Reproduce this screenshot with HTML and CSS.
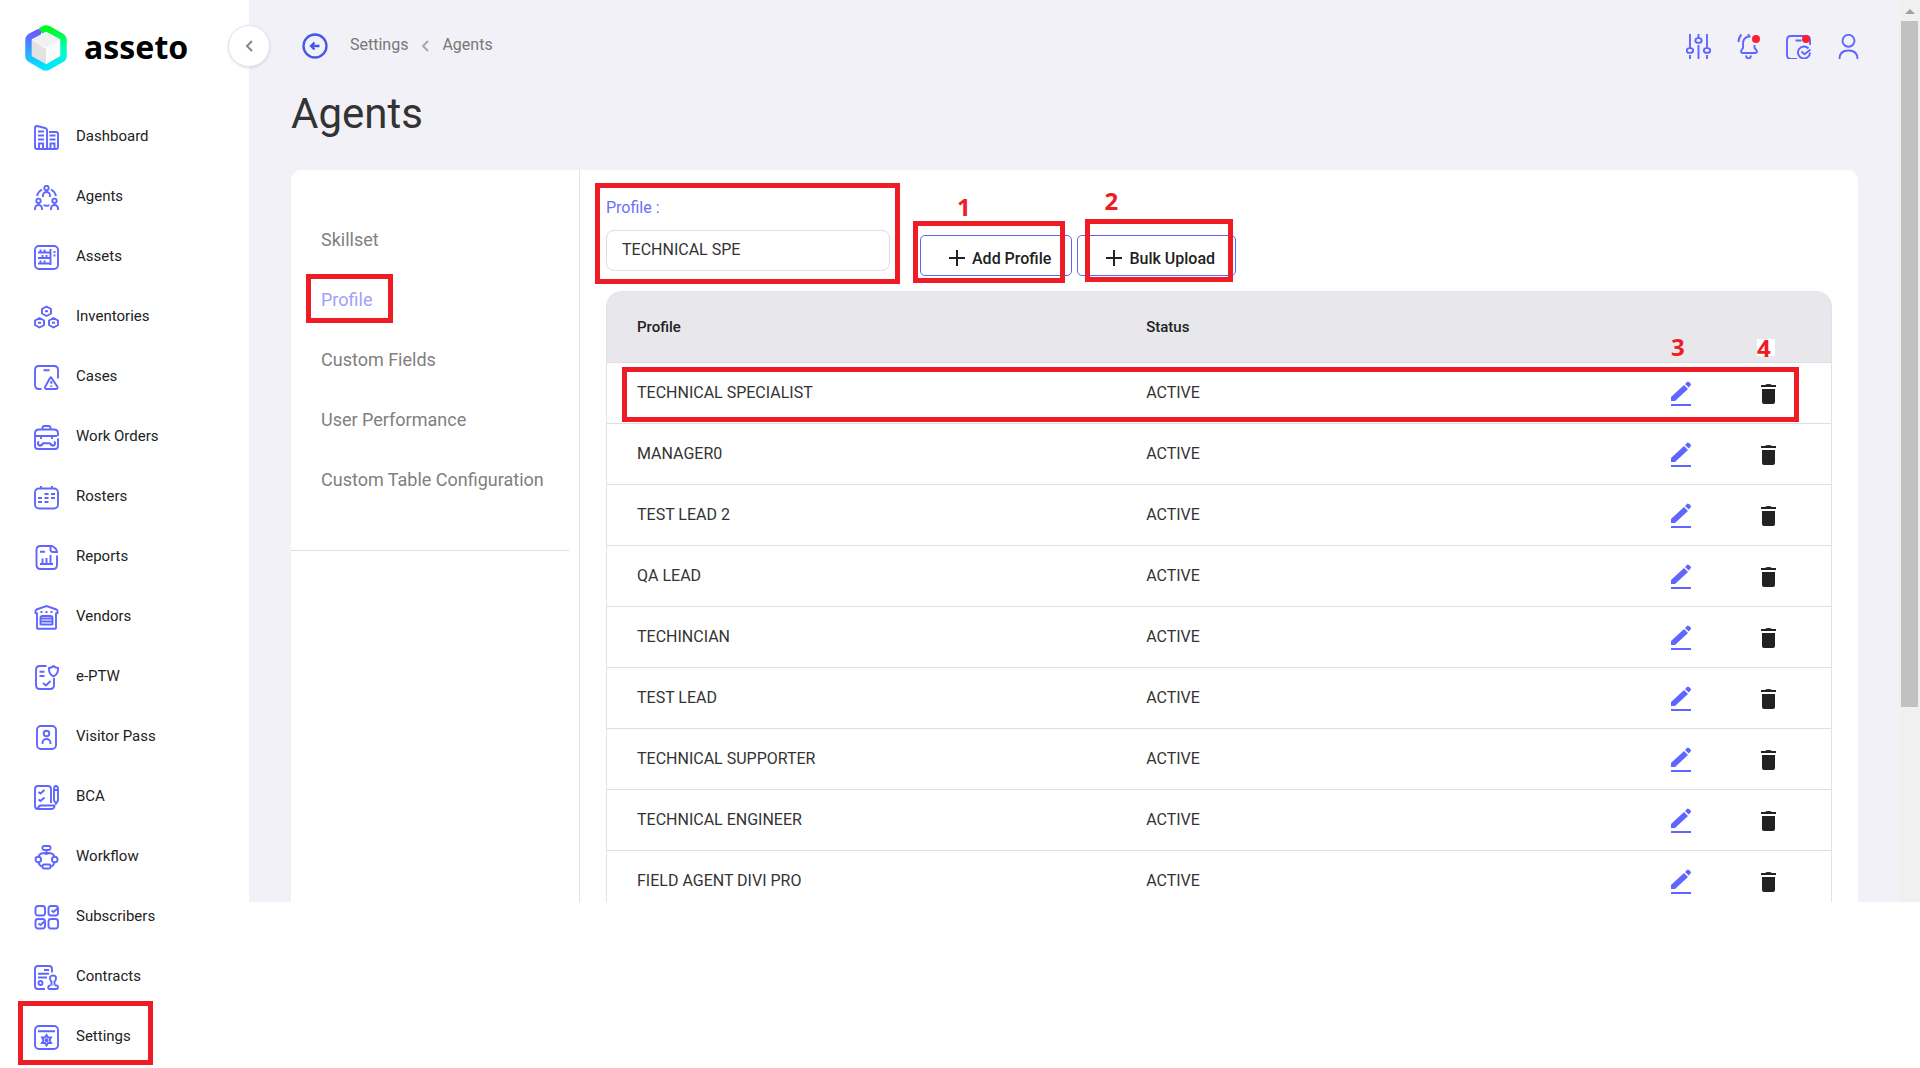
FILE: index.html
```html
<!DOCTYPE html>
<html lang="en">
<head>
    <meta charset="UTF-8">
    <meta name="viewport" content="width=device-width, initial-scale=1.0">
    <title>Agents - Asseto</title>
    <link rel="stylesheet" href="styles.css">
</head>
<body>
    <!-- Icon set -->
    <svg class="icon-set" aria-hidden="true">
        <symbol id="i-dashboard" viewBox="0 0 25 25"><path d="M1 3q0-2 2-2l8 2q2 .5 2 2.500V24H3q-2 0-2-2zM15 7h7q2 0 2 2v13q0 2-2 2h-7q-1.500 0-1.500-1.500M4 6.500h6M4 10.500h6M4 14.500h6M15.500 10.500h6M15.500 14.500h6M5 24v-5.500h4V24M16.500 24v-5.500h4V24"/></symbol>
        <symbol id="i-agents" viewBox="0 0 25 25"><circle cx="12.500" cy="3" r="2.200"/><circle cx="4.500" cy="15.800" r="2.200"/><circle cx="20.500" cy="15.800" r="2.200"/><path d="M9 12v-1.500a3.500 3.500 0 0 1 7 0V12M1 25v-1.500a3.500 3.500 0 0 1 7 0V25M17 25v-1.500a3.500 3.500 0 0 1 7 0V25M3 11q1.200-4.500 5-6.500M22 11q-1.200-4.500-5-6.500M9.500 20q3 1.500 6 0"/></symbol>
        <symbol id="i-assets" viewBox="0 0 25 25"><rect x="1" y="1" width="23" height="23" rx="4"/><path d="M4 7.500h13M4 13h13M4 18.500h13M16.500 4v16M6.500 7V4.500M10.500 7V4.500M8.500 12.500V10M12.500 12.500V10M6.500 18v-2.500M10.500 18v-2.500M20.500 6v2M20.500 9.500v2"/></symbol>
        <symbol id="i-inventories" viewBox="0 0 25 25"><path d="M12.500 1.500l4.500 2.500v4.500l-4.500 2.500-4.500-2.500V4zM5.500 13l4.500 2.500V20l-4.500 2.500L1 20v-4.500zM19.500 13l4.500 2.500V20l-4.500 2.500L15 20v-4.500zM11 6.300h3M4 17.800h3M18 17.800h3"/></symbol>
        <symbol id="i-cases" viewBox="0 0 25 25"><path d="M7.500 24H5q-4 0-4-4V5q0-4 4-4h15q4 0 4 4v8.500M9.500 5.200h6M17.200 12.500l6.300 9.500q.5 2-1.500 2h-9.500q-2 0-1.500-2l4.500-8q1-2.500 1.700-1.500zM17.300 16v2.800M17.300 20.500v1.400"/></symbol>
        <symbol id="i-workorders" viewBox="0 0 25 25"><path d="M8.500 4.500V3q0-2 2-2h4q2 0 2 2v1.500M1 11V8.500q0-4 4-4h15q4 0 4 4v2.500M1 9v12q0 3 3 3h17q3 0 3-3v-7.500M1 11h22M7 11v3M18 11v3M8.500 18.200h8M8.500 18.200a2.300 2.300 0 1 1-3.500-1.700M8.500 18.200a2.300 2.300 0 0 1-3.500 1.700M16.500 18.200a2.300 2.300 0 1 0 3.500-1.700M16.500 18.200a2.300 2.300 0 0 0 3.500 1.700"/></symbol>
        <symbol id="i-rosters" viewBox="0 0 25 25"><rect x="1" y="3.500" width="23" height="20" rx="4"/><path d="M7 3V1M18 3V1M10.500 9h4M17 9h4M4 13h4M10.500 13h4M17 13h4M4 17h4M10.500 17h4"/></symbol>
        <symbol id="i-reports" viewBox="0 0 25 25"><path d="M17 1H6.500q-4 0-4 4v15q0 4 4 4H19q4 0 4-4v-9.500M16.500 1.500v3q0 2.500 2.500 2.500h4q0-2-1.500-3.500L19 1.500q-1-.8-2.500-.5M6 6.800h5M6 19h13M8.500 18.500v-5M12.500 18.500V13M16.500 18.500V10"/></symbol>
        <symbol id="i-vendors" viewBox="0 0 25 25"><path d="M3 8.500L1.500 8V6q0-1 1-1.500l10-3.500 10 3.500q1 .5 1 1.500v2l-1.500.5V23q0 .8-1 .8H4q-1 0-1-.8zM6.500 20v-7q0-2 2-2h8q2 0 2 2v7M7 13.500h11M7 16.500h11M6.500 19.500h12M6.500 7h2M11.500 7h2M16.500 7h2"/></symbol>
        <symbol id="i-eptw" viewBox="0 0 25 25"><path d="M12.500 1H6Q2 1 2 5v15q0 4 4 4h10q4 0 4-4v-7M15 3q2.500 0 4.500-2 2 2 4.500 2 .5 6-4.500 8.500Q14.500 9 15 3zM5.500 6.800h5M5.500 11h5M9 18l3 2.500 4.500-4.500"/></symbol>
        <symbol id="i-visitor" viewBox="0 0 25 25"><rect x="3" y="1" width="19" height="23" rx="4"/><circle cx="12.500" cy="8.500" r="2.800"/><path d="M8.500 19v-1a4 4 0 0 1 8 0v1"/></symbol>
        <symbol id="i-bca" viewBox="0 0 25 25"><path d="M17 18V4q0-3-3-3H4Q1 1 1 4v17q0 3 3 3h13q3.500 0 3.500-3.500H7Q4 20.500 4 24M4.500 7l2 1.500 4-3.500M4.500 14.500l2 1.500 4-3.500M20 4q0-3 2-3t2 3v11.500l-2 3-2-3zM20 5h4"/></symbol>
        <symbol id="i-workflow" viewBox="0 0 25 25"><rect x="8.500" y="1" width="8" height="4" rx="1.500"/><circle cx="4.300" cy="14.500" r="2.800"/><circle cx="20.700" cy="14.500" r="2.800"/><rect x="8.500" y="19.500" width="8" height="4" rx="1.500"/><path d="M12.500 5v3M9.500 8h6l-3 1zM4.500 11.500Q6 8 10 8M20.500 11.500Q19 8 15 8M4.500 17.500q1 3.500 4 4M20.500 17.500q-1 3.500-4 4"/></symbol>
        <symbol id="i-subscribers" viewBox="0 0 25 25"><rect x="1.500" y="1" width="9.500" height="9.500" rx="2.500"/><rect x="14.500" y="1" width="9.500" height="9.500" rx="2.500"/><rect x="1.500" y="14" width="9.500" height="9.500" rx="2.500"/><rect x="14.500" y="14" width="9.500" height="9.500" rx="2.500"/><path d="M17.500 5.500l2 1.500 4-3.500M4.500 18.500l2 1.500 4-3.500"/></symbol>
        <symbol id="i-contracts" viewBox="0 0 25 25"><path d="M11 24H4q-3 0-3-3V4q0-3 3-3h11q3 0 3 3v3.500M10 5h5M4 8.800h11M4 12.500h9"/><circle cx="6.500" cy="18" r="2"/><path d="M17.500 20.500v-4q-2-1.500-1.500-4 .5-2 3-2t3 2q.5 2.500-1.500 4v4M16.500 20.500q-2 0-2.300 1.500-.2 2 1.500 2H22q2 0 2-2t-3-1.500"/></symbol>
        <symbol id="i-settings" viewBox="0 0 25 25"><rect x="1" y="1" width="23" height="23" rx="4"/><path d="M4 6.200h17M12.500 10l1.500 2.500h3l-1.500 2.800 1.500 2.700h-3l-1.500 2.500-1.500-2.500H8l1.500-2.700L8 12.500h3z"/><circle cx="12.500" cy="15.200" r="1"/></symbol>

        <symbol id="i-sliders" viewBox="0 0 25 25"><ellipse cx="4" cy="16.500" rx="3.200" ry="2.400"/><ellipse cx="12.500" cy="6.500" rx="3.200" ry="2.400"/><ellipse cx="21" cy="16.500" rx="3.200" ry="2.400"/><path d="M4 0v14M4 21v4M12.500 0v4M12.500 11v14M21 0v14M21 21v4"/></symbol>
        <symbol id="i-bell" viewBox="0 0 25 25"><path d="M14.500 2.500h-2q-5.500 1-5.500 7.500v4l-1.700 2.500q-.8 2.500 1.700 2.500h12q2.500 0 1.700-2.500L18.500 14v-3M12.500 0v2.500M10 21.500q.5 3 2.500 3t2.500-3M2.500 8q0-4.500 3-7.500"/></symbol>
        <symbol id="i-doccheck" viewBox="0 0 25 25"><path d="M11 25H5q-4 0-4-4V6q0-4 4-4h15q4 0 4 4v5M9.500 6.500h6M22.500 14.500a6 6 0 1 0 1.500 4M15.500 17.500l3 2.800 6-4.800"/></symbol>
        <symbol id="i-user" viewBox="0 0 25 25"><circle cx="12.500" cy="6.800" r="6"/><path d="M3.500 25q0-8.500 9-8.500t9 8.500"/></symbol>
        <symbol id="i-back" viewBox="0 0 26 26"><circle cx="13" cy="13" r="11.500"/><path d="M17.500 13H9.500M12.500 9.500L9 13l3.500 3.500"/></symbol>
        <symbol id="i-chevron" viewBox="0 0 8 12"><path d="M7 1L2 6l5 5"/></symbol>
        <symbol id="i-plus" viewBox="0 0 16 16"><path d="M8 0v16M0 8h16"/></symbol>
        <symbol id="i-edit" viewBox="0 0 20 26"><path d="M0 20v-4L13 4l4 4L4 20zM14 3l2.500-2.500Q20 1.500 20 4l-2.300 2.500z"/><rect y="23" width="20" height="2"/></symbol>
        <symbol id="i-trash" viewBox="0 0 15 20"><path d="M0 1h4q1-1 3.500-1T11 1h4v2H0zM1 5h13v13q0 2-2 2H3q-2 0-2-2z"/></symbol>
    </svg>

    <div class="app">
        <!-- Sidebar -->
        <aside class="sidebar">
            <a href="#" class="logo">
                <svg class="logo-mark" viewBox="0 0 42 46" aria-hidden="true">
                    <defs>
                        <linearGradient id="gLeft" x1="0" y1="0" x2="0" y2="1"><stop offset="0" stop-color="#6b5cff"/><stop offset=".5" stop-color="#389cff"/><stop offset="1" stop-color="#00e4ff"/></linearGradient>
                        <linearGradient id="gRight" x1="0" y1="0" x2="0" y2="1"><stop offset="0" stop-color="#00f91c"/><stop offset=".5" stop-color="#00ffb8"/><stop offset="1" stop-color="#00e8ff"/></linearGradient>
                    </defs>
                    <path d="M21 6l15 8v17l-15 9-15-9V14z" fill="#fff"/>
                    <path d="M21 7l14 8-14 8-14-8z" fill="#f1f1f1"/>
                    <path d="M7 15l14 9v16L7 31z" fill="#e2e2e2"/>
                    <path d="M35 15l-14 9v16l14-9z" fill="#fbfbfb"/>
                    <path d="M15.500 6l3.500-2q2-1 4 0l13.500 7.500q2 1.200 2 3.500v16q0 2-2 3.200L23 41.800q-2 1-4 0" fill="none" stroke="url(#gRight)" stroke-width="6.500"/>
                    <path d="M13 7.500L5.500 11.500Q3.500 13 3.500 15v16q0 2 2 3.200L19 41.800" fill="none" stroke="url(#gLeft)" stroke-width="6.500" stroke-linecap="round"/>
                </svg>
                <span class="logo-text">asseto</span>
            </a>
            <button class="collapse-button" aria-label="Collapse menu"><svg class="chevron"><use href="#i-chevron"/></svg></button>

            <nav class="main-menu">
                <a href="#"><svg><use href="#i-dashboard"/></svg>Dashboard</a>
                <a href="#"><svg><use href="#i-agents"/></svg>Agents</a>
                <a href="#"><svg><use href="#i-assets"/></svg>Assets</a>
                <a href="#"><svg><use href="#i-inventories"/></svg>Inventories</a>
                <a href="#"><svg><use href="#i-cases"/></svg>Cases</a>
                <a href="#"><svg><use href="#i-workorders"/></svg>Work Orders</a>
                <a href="#"><svg><use href="#i-rosters"/></svg>Rosters</a>
                <a href="#"><svg><use href="#i-reports"/></svg>Reports</a>
                <a href="#"><svg><use href="#i-vendors"/></svg>Vendors</a>
                <a href="#"><svg><use href="#i-eptw"/></svg>e-PTW</a>
                <a href="#"><svg><use href="#i-visitor"/></svg>Visitor Pass</a>
                <a href="#"><svg><use href="#i-bca"/></svg>BCA</a>
                <a href="#"><svg><use href="#i-workflow"/></svg>Workflow</a>
                <a href="#"><svg><use href="#i-subscribers"/></svg>Subscribers</a>
                <a href="#"><svg><use href="#i-contracts"/></svg>Contracts</a>
                <a href="#"><svg><use href="#i-settings"/></svg>Settings<span class="mark mark-settings"></span></a>
            </nav>
        </aside>

        <!-- Page -->
        <div class="page">
            <main class="main">
                <header class="topbar">
                    <button class="icon-button" aria-label="Back"><svg class="back-icon"><use href="#i-back"/></svg></button>
                    <nav class="breadcrumb">
                        <a href="#">Settings</a>
                        <svg class="chevron"><use href="#i-chevron"/></svg>
                        <a href="#">Agents</a>
                    </nav>
                    <div class="topbar-actions">
                        <button class="icon-button" aria-label="Filters"><svg><use href="#i-sliders"/></svg></button>
                        <button class="icon-button" aria-label="Notifications"><svg><use href="#i-bell"/></svg><span class="dot"></span></button>
                        <button class="icon-button" aria-label="Tasks"><svg><use href="#i-doccheck"/></svg><span class="dot"></span></button>
                        <button class="icon-button" aria-label="Account"><svg><use href="#i-user"/></svg></button>
                    </div>
                </header>

                <h1>Agents</h1>

                <div class="card">
                    <div class="sub-menu">
                        <nav>
                            <a href="#">Skillset</a>
                            <a href="#" class="active">Profile<span class="mark mark-tab"></span></a>
                            <a href="#">Custom Fields</a>
                            <a href="#">User Performance</a>
                            <a href="#">Custom Table Configuration</a>
                        </nav>
                    </div>

                    <section class="content">
                        <div class="toolbar">
                            <div class="field">
                                <label for="profile">Profile :</label>
                                <input type="text" id="profile" value="TECHNICAL SPE">
                                <span class="mark mark-field"></span>
                            </div>
                            <div class="toolbar-buttons">
                                <button class="outline-button"><svg><use href="#i-plus"/></svg>Add Profile<span class="mark mark-add"></span><span class="step step-add">1</span></button>
                                <button class="outline-button"><svg><use href="#i-plus"/></svg>Bulk Upload<span class="mark mark-bulk"></span><span class="step step-bulk">2</span></button>
                            </div>
                        </div>

                        <div class="table-box">
                            <table>
                                <thead>
                                    <tr>
                                        <th class="col-profile">Profile</th>
                                        <th>Status</th>
                                        <th class="col-edit"><span class="step step-edit">3</span></th>
                                        <th class="col-delete"><span class="step step-delete">4</span></th>
                                    </tr>
                                </thead>
                                <tbody>
                                    <tr>
                                        <td>TECHNICAL SPECIALIST</td>
                                        <td>ACTIVE</td>
                                        <td class="col-edit"><button class="row-button" aria-label="Edit"><svg class="edit"><use href="#i-edit"/></svg></button></td>
                                        <td class="col-delete"><button class="row-button" aria-label="Delete"><svg class="trash"><use href="#i-trash"/></svg></button></td>
                                    </tr>
                                    <tr>
                                        <td>MANAGER0</td>
                                        <td>ACTIVE</td>
                                        <td class="col-edit"><button class="row-button" aria-label="Edit"><svg class="edit"><use href="#i-edit"/></svg></button></td>
                                        <td class="col-delete"><button class="row-button" aria-label="Delete"><svg class="trash"><use href="#i-trash"/></svg></button></td>
                                    </tr>
                                    <tr>
                                        <td>TEST LEAD 2</td>
                                        <td>ACTIVE</td>
                                        <td class="col-edit"><button class="row-button" aria-label="Edit"><svg class="edit"><use href="#i-edit"/></svg></button></td>
                                        <td class="col-delete"><button class="row-button" aria-label="Delete"><svg class="trash"><use href="#i-trash"/></svg></button></td>
                                    </tr>
                                    <tr>
                                        <td>QA LEAD</td>
                                        <td>ACTIVE</td>
                                        <td class="col-edit"><button class="row-button" aria-label="Edit"><svg class="edit"><use href="#i-edit"/></svg></button></td>
                                        <td class="col-delete"><button class="row-button" aria-label="Delete"><svg class="trash"><use href="#i-trash"/></svg></button></td>
                                    </tr>
                                    <tr>
                                        <td>TECHINCIAN</td>
                                        <td>ACTIVE</td>
                                        <td class="col-edit"><button class="row-button" aria-label="Edit"><svg class="edit"><use href="#i-edit"/></svg></button></td>
                                        <td class="col-delete"><button class="row-button" aria-label="Delete"><svg class="trash"><use href="#i-trash"/></svg></button></td>
                                    </tr>
                                    <tr>
                                        <td>TEST LEAD</td>
                                        <td>ACTIVE</td>
                                        <td class="col-edit"><button class="row-button" aria-label="Edit"><svg class="edit"><use href="#i-edit"/></svg></button></td>
                                        <td class="col-delete"><button class="row-button" aria-label="Delete"><svg class="trash"><use href="#i-trash"/></svg></button></td>
                                    </tr>
                                    <tr>
                                        <td>TECHNICAL SUPPORTER</td>
                                        <td>ACTIVE</td>
                                        <td class="col-edit"><button class="row-button" aria-label="Edit"><svg class="edit"><use href="#i-edit"/></svg></button></td>
                                        <td class="col-delete"><button class="row-button" aria-label="Delete"><svg class="trash"><use href="#i-trash"/></svg></button></td>
                                    </tr>
                                    <tr>
                                        <td>TECHNICAL ENGINEER</td>
                                        <td>ACTIVE</td>
                                        <td class="col-edit"><button class="row-button" aria-label="Edit"><svg class="edit"><use href="#i-edit"/></svg></button></td>
                                        <td class="col-delete"><button class="row-button" aria-label="Delete"><svg class="trash"><use href="#i-trash"/></svg></button></td>
                                    </tr>
                                    <tr>
                                        <td>FIELD AGENT DIVI PRO</td>
                                        <td>ACTIVE</td>
                                        <td class="col-edit"><button class="row-button" aria-label="Edit"><svg class="edit"><use href="#i-edit"/></svg></button></td>
                                        <td class="col-delete"><button class="row-button" aria-label="Delete"><svg class="trash"><use href="#i-trash"/></svg></button></td>
                                    </tr>
                                </tbody>
                            </table>
                            <span class="mark mark-row"></span>
                        </div>
                    </section>
                </div>
            </main>

            <div class="scrollbar" aria-hidden="true">
                <span class="scroll-arrow"></span>
                <span class="scroll-thumb"></span>
            </div>
        </div>
    </div>
</body>
</html>
```

FILE: styles.css
```css
* {
    box-sizing: border-box;
}

body {
    margin: 0;
    font-family: Roboto, "Liberation Sans", sans-serif;
    font-size: 16px;
    color: #222;
    background: #fff;
}

a {
    color: inherit;
    text-decoration: none;
}

button {
    font: inherit;
    color: inherit;
    cursor: pointer;
}

svg {
    display: block;
    fill: none;
    stroke: #5f66ff;
    stroke-width: 2;
    flex-shrink: 0;
}

.icon-set {
    position: absolute;
    width: 0;
    height: 0;
}

.app {
    display: flex;
    align-items: flex-start;
}

/* Sidebar */
.sidebar {
    position: relative;
    width: 249px;
    flex-shrink: 0;
}

.logo {
    display: flex;
    align-items: center;
    gap: 17px;
    height: 106px;
    padding: 0 0 10px 25px;
}

.logo-mark {
    width: 42px;
    height: 46px;
    stroke: none;
}

.logo-text {
    padding-bottom: 4px;
    font-family: "Noto Sans", "Open Sans", sans-serif;
    font-size: 32px;
    font-weight: 700;
    color: #000;
}

.collapse-button {
    position: absolute;
    top: 25px;
    right: -21px;
    z-index: 2;
    display: flex;
    align-items: center;
    justify-content: center;
    width: 42px;
    height: 42px;
    padding: 0;
    border: 1px solid #e4e3ea;
    border-radius: 50%;
    background: #fff;
    box-shadow: 0 1px 3px rgba(0, 0, 0, 0.12);
}

.chevron {
    width: 8px;
    height: 12px;
    stroke: #888;
}

.main-menu a {
    position: relative;
    display: flex;
    align-items: center;
    gap: 17px;
    height: 60px;
    padding-left: 34px;
    font-size: 15px;
}

.main-menu svg {
    width: 25px;
    height: 25px;
    margin-top: 3px;
    stroke-width: 1.9;
}

/* Page */
.page {
    display: flex;
    flex: 1;
    min-width: 0;
    height: calc(100vh - 166px);
    overflow: hidden;
    background: #f2f1f7;
}

.main {
    flex: 1;
    min-width: 0;
    padding: 0 41px 0 42px;
}

.topbar {
    display: flex;
    align-items: center;
    height: 91px;
    padding-left: 11px;
}

.icon-button {
    position: relative;
    padding: 0;
    border: none;
    background: none;
}

.icon-button svg {
    width: 25px;
    height: 25px;
    stroke-width: 1.9;
}

.icon-button .back-icon {
    width: 26px;
    height: 26px;
    stroke: #4458e8;
    stroke-width: 2.3;
}

.breadcrumb {
    display: flex;
    align-items: center;
    gap: 13px;
    padding: 0 0 2px 22px;
    color: #777;
}

.breadcrumb .chevron {
    margin-top: 2px;
    stroke: #aaa;
}

.topbar-actions {
    display: flex;
    gap: 25px;
    margin-left: auto;
    margin-right: -3px;
    padding-top: 2px;
}

.dot {
    position: absolute;
    top: 1px;
    right: 1px;
    width: 8px;
    height: 8px;
    border-radius: 50%;
    background: #ff1f2d;
}

h1 {
    margin: 0;
    height: 79px;
    font-size: 42px;
    font-weight: 400;
    line-height: 46px;
    color: #333;
}

.card {
    display: flex;
    min-height: 900px;
    border-radius: 10px;
    background: #fff;
}

.sub-menu {
    width: 289px;
    flex-shrink: 0;
    padding-right: 10px;
    border-right: 1px solid #e2e2e6;
}

.sub-menu nav {
    padding: 39px 0 41px 30px;
    border-bottom: 1px solid #dedede;
}

.sub-menu a {
    position: relative;
    display: flex;
    align-items: center;
    height: 60px;
    font-size: 18px;
    color: #808080;
}

.sub-menu .active {
    color: #a09ffa;
}

.content {
    flex: 1;
    min-width: 0;
    padding: 25px 26px 0;
}

.toolbar {
    display: flex;
    gap: 30px;
    align-items: flex-start;
}

.field {
    position: relative;
    width: 284px;
}

.field label {
    display: block;
    margin-bottom: 9px;
    line-height: 26px;
    color: #6b6ef9;
}

.field input {
    display: block;
    width: 100%;
    height: 41px;
    padding: 0 15px 3px;
    border: 1px solid #dcdce4;
    border-radius: 8px;
    font: inherit;
    color: #333;
    background: #fff;
}

.toolbar-buttons {
    display: flex;
    gap: 5px;
    padding-top: 40px;
}

.outline-button {
    position: relative;
    display: flex;
    align-items: center;
    gap: 7px;
    height: 41px;
    padding: 5px 20px 0 28px;
    border: 1px solid #6064f5;
    border-radius: 5px;
    background: #fff;
    font-weight: 500;
    white-space: nowrap;
}

.outline-button svg {
    width: 16px;
    height: 16px;
    stroke: #222;
}

/* Table */
.table-box {
    position: relative;
    margin-top: 15px;
    border: 1px solid #e2e2e6;
    border-radius: 15px 15px 0 0;
}

table {
    width: 100%;
    table-layout: fixed;
    border-collapse: separate;
    border-spacing: 0;
}

th,
td {
    padding: 0 30px;
    border-bottom: 1px solid #dedede;
    text-align: left;
}

th {
    position: relative;
    height: 71px;
    font-size: 15px;
    font-weight: 500;
    background: #e8e7ec;
}

th:first-child {
    border-top-left-radius: 14px;
}

th:last-child {
    border-top-right-radius: 14px;
}

td {
    height: 61px;
    padding-bottom: 2px;
    font-size: 16px;
    color: #333;
}

.col-profile {
    width: 41.6%;
}

.col-edit {
    width: 87px;
    padding: 0;
}

.col-delete {
    width: 107px;
    padding: 0 19px 0 0;
}

.row-button {
    display: flex;
    align-items: center;
    justify-content: center;
    width: 100%;
    height: 30px;
    padding: 2px 0 0;
    border: none;
    background: none;
}

.row-button svg {
    stroke: none;
}

.edit {
    width: 20px;
    height: 26px;
    fill: #5f66ff;
}

.trash {
    width: 15px;
    height: 20px;
    fill: #222;
}

/* Numbered guide marks */
.mark {
    position: absolute;
    border: 5px solid #ee1c24;
    pointer-events: none;
}

.mark-settings {
    top: -5px;
    left: 18px;
    width: 135px;
    height: 64px;
}

.mark-tab {
    top: 5px;
    left: -15px;
    width: 87px;
    height: 49px;
}

.mark-field {
    top: -12px;
    right: -10px;
    bottom: -13px;
    left: -11px;
}

.mark-add {
    top: -15px;
    right: 6px;
    bottom: -8px;
    left: -8px;
}

.mark-bulk {
    top: -17px;
    right: 2px;
    bottom: -7px;
    left: 7px;
}

.mark-row {
    top: 75px;
    right: 32px;
    left: 15px;
    height: 55px;
}

.step {
    position: absolute;
    font-family: "Open Sans", "Noto Sans", sans-serif;
    font-size: 24px;
    font-weight: 700;
    line-height: 24px;
    color: #ee1c24;
}

.step-add {
    top: -41px;
    left: 36px;
}

.step-bulk {
    top: -47px;
    left: 26px;
}

.step-edit {
    bottom: 3px;
    left: 34px;
}

.step-delete {
    bottom: 6px;
    left: 33px;
    width: 18px;
    line-height: 17px;
    background: #fff;
}

/* Scrollbar */
.scrollbar {
    display: flex;
    flex-direction: column;
    align-items: center;
    width: 21px;
    flex-shrink: 0;
    background: #f0f0f0;
}

.scroll-arrow {
    margin: 9px 0 7px;
    border: 5px solid transparent;
    border-top: none;
    border-bottom-color: #a0a0a0;
}

.scroll-thumb {
    width: 17px;
    height: 76%;
    background: #c1c1c1;
}
```
